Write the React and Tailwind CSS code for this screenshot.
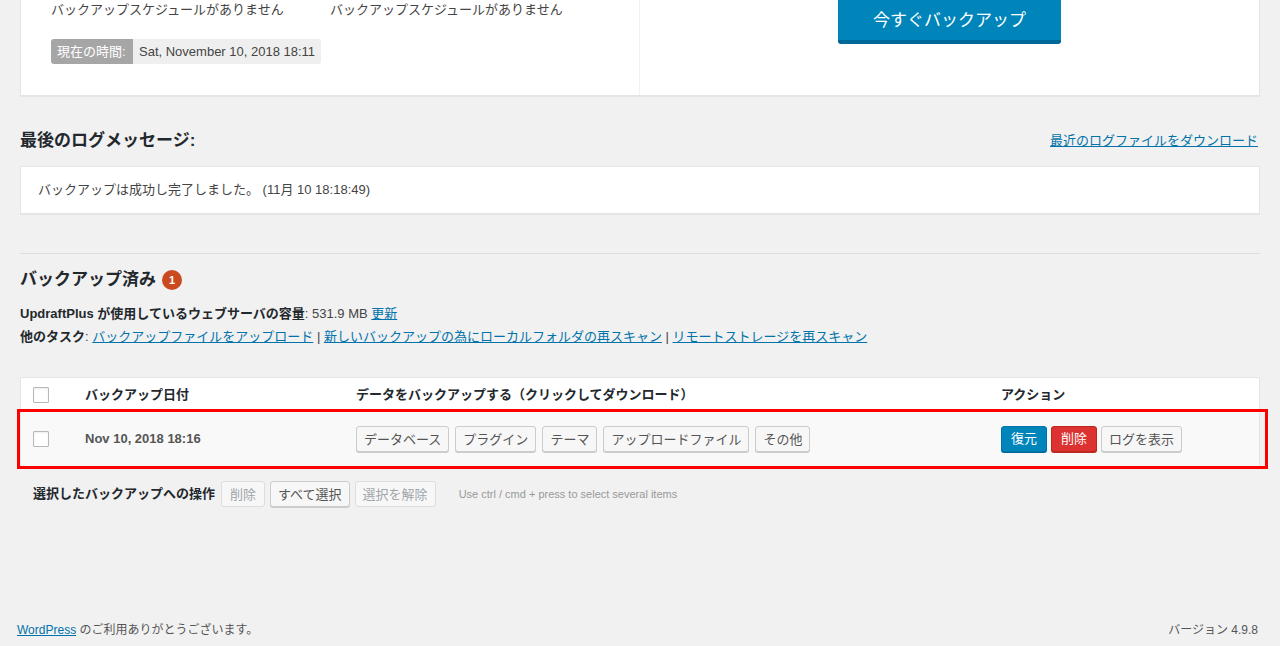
import React from "react";

const linkCls = "text-[#0073aa] underline decoration-[#0073aa]";

function Btn({ children, disabled, wide }) {
  return (
    <span
      className={
        "inline-flex items-center h-[26px] rounded-[3px] border text-[13px] leading-none whitespace-nowrap " +
        (wide ? "px-[8px] " : "px-[7px] ") +
        (disabled
          ? "bg-[#f7f7f7] border-[#dddddd] text-[#a0a5aa]"
          : "bg-[#f7f7f7] border-[#cccccc] text-[#555555] shadow-[0_1px_0_#cccccc]")
      }
    >
      {children}
    </span>
  );
}

function Check() {
  return <span className="block w-[16px] h-[16px] border border-[#b4b9be] bg-white rounded-[1px] shadow-[inset_0_1px_2px_rgba(0,0,0,0.08)]" />;
}

export default function App() {
  return (
    <div className="min-h-[646px] flex flex-col bg-[#f1f1f1] text-[#444444] font-['Liberation_Sans','Noto_Sans_CJK_JP',sans-serif] text-[13px]">
      {/* top card */}
      <div className="mx-[20px] h-[96px] flex bg-white border border-t-0 border-[#e5e5e5] shadow-[0_1px_1px_rgba(0,0,0,0.04)]">
        <div className="w-[619px] border-r border-[#f1f1f1] pl-[30px]">
          <div className="flex leading-[20px] text-[13px] text-[#444]">
            <span className="w-[279px]">バックアップスケジュールがありません</span>
            <span>バックアップスケジュールがありません</span>
          </div>
          <div className="mt-[19px] inline-flex h-[25px] rounded-[3px] overflow-hidden text-[13px] whitespace-nowrap">
            <span className="bg-[#a6a6a6] text-white px-[6px] flex items-center w-[82px]">現在の時間:</span>
            <span className="bg-[#efefef] text-[#444] px-[6px] flex items-center">Sat, November 10, 2018 18:11</span>
          </div>
        </div>
        <div className="flex-1 flex justify-center">
          <span className="w-[223px] h-[43px] bg-[#0085ba] border-b-[3px] border-[#006799] rounded-b-[3px] text-white text-[17px] flex items-center justify-center pt-[1px] shadow-[0_1px_0_#006799]">
            今すぐバックアップ
          </span>
        </div>
      </div>

      {/* last log */}
      <div className="ml-[20px] mr-[22px] mt-[30px] h-[30px] flex items-center justify-between">
        <h2 className="text-[17px] font-bold text-[#23282d] leading-[30px]">最後のログメッセージ:</h2>
        <a className={linkCls + " text-[13px]"}>最近のログファイルをダウンロード</a>
      </div>
      <div className="mx-[20px] mt-[10px] h-[48px] bg-white border border-[#e5e5e5] flex items-center pl-[17px] text-[13px] text-[#444] shadow-[0_1px_1px_rgba(0,0,0,0.04)]">
        バックアップは成功し完了しました。 (11月 10 18:18:49)
      </div>

      <div className="mx-[20px] mt-[39px] h-px bg-[#dddddd]" />

      {/* backups */}
      <div className="mx-[20px] mt-[14px] h-[24px] flex items-center gap-[6px]">
        <h3 className="text-[17px] font-bold text-[#23282d] leading-[24px]">バックアップ済み</h3>
        <span className="w-[20px] h-[20px] rounded-full bg-[#ca4a1f] text-white text-[11px] font-bold flex items-center justify-center">1</span>
      </div>
      <div className="mx-[20px] mt-[10px] leading-[23px] text-[13px]">
        <div>
          <b className="text-[#23282d]">UpdraftPlus が使用しているウェブサーバの容量</b>: 531.9 MB <a className={linkCls}>更新</a>
        </div>
        <div>
          <b className="text-[#23282d]">他のタスク</b>: <a className={linkCls}>バックアップファイルをアップロード</a> |{" "}
          <a className={linkCls}>新しいバックアップの為にローカルフォルダの再スキャン</a> |{" "}
          <a className={linkCls}>リモートストレージを再スキャン</a>
        </div>
      </div>

      {/* table */}
      <div className="relative mx-[20px] mt-[29px] bg-white border border-[#e5e5e5] shadow-[0_1px_1px_rgba(0,0,0,0.04)]">
        <div className="h-[33px] flex items-center text-[13px] font-bold text-[#23282d]">
          <div className="w-[64px] pl-[12px]"><Check /></div>
          <div className="w-[271px]">バックアップ日付</div>
          <div className="w-[645px]">データをバックアップする（クリックしてダウンロード）</div>
          <div>アクション</div>
        </div>
        <div className="h-[55px] flex items-center bg-[#f9f9f9] border-t border-[#f1f1f1]">
          <div className="w-[64px] pl-[12px]"><Check /></div>
          <div className="w-[271px] font-bold text-[#555]">Nov 10, 2018 18:16</div>
          <div className="w-[645px] flex gap-[6px]">
            <Btn>データベース</Btn>
            <Btn>プラグイン</Btn>
            <Btn>テーマ</Btn>
            <Btn>アップロードファイル</Btn>
            <Btn>その他</Btn>
          </div>
          <div className="flex gap-[4px]">
            <span className="inline-flex items-center h-[26px] px-[9px] rounded-[3px] bg-[#0085ba] border border-[#0073aa] text-white shadow-[0_1px_0_#006799]">復元</span>
            <span className="inline-flex items-center h-[26px] px-[9px] rounded-[3px] bg-[#dc3232] border border-[#ba281e] text-white shadow-[0_1px_0_#ba281e]">削除</span>
            <Btn>ログを表示</Btn>
          </div>
        </div>
        <div className="absolute left-[-4px] top-[31px] w-[1251px] h-[60px] border-[3px] border-[#ff0000] pointer-events-none" />
      </div>

      {/* bulk actions */}
      <div className="mx-[33px] mt-[14px] h-[26px] flex items-center">
        <b className="text-[13px] text-[#23282d] mr-[6px]">選択したバックアップへの操作</b>
        <div className="flex gap-[5px]">
          <Btn disabled wide>削除</Btn>
          <Btn>すべて選択</Btn>
          <Btn disabled>選択を解除</Btn>
        </div>
        <span className="ml-[23px] text-[11px] text-[#999]">Use ctrl / cmd + press to select several items</span>
      </div>

      {/* footer */}
      <div className="mt-auto pl-[17px] pr-[22px] pb-[6px] h-[26px] flex items-center justify-between text-[12px] text-[#555]">
        <span><a className={linkCls}>WordPress</a> のご利用ありがとうございます。</span>
        <span className="text-[12px]">バージョン 4.9.8</span>
      </div>
    </div>
  );
}
